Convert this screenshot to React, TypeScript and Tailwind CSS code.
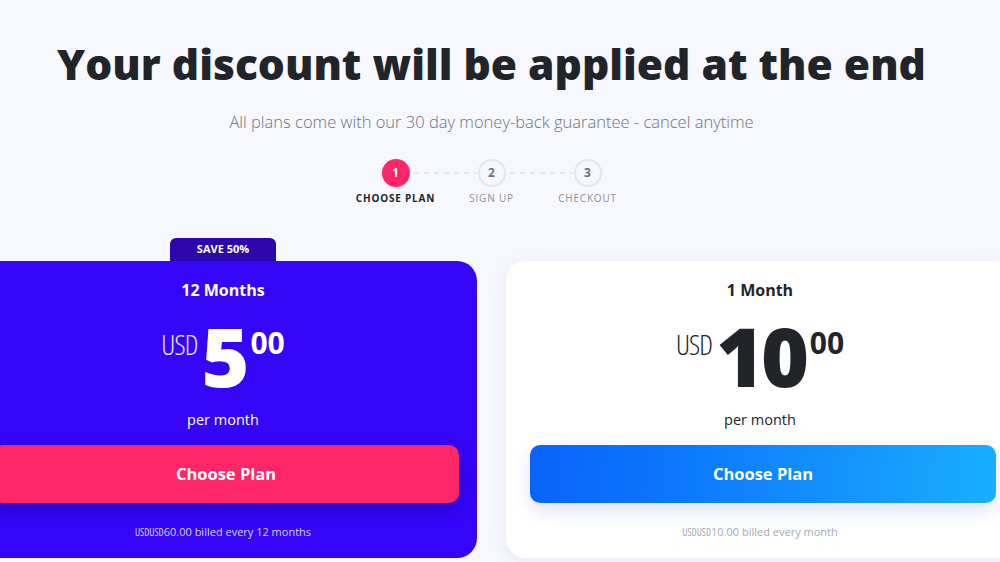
const font = { fontFamily: '"Open Sans", "Noto Sans", sans-serif' };

function Step({ n, label, active }: { n: number; label: string; active?: boolean }) {
  return (
    <div className="flex w-7 flex-col items-center">
      <div
        className={
          active
            ? "flex h-7 w-7 items-center justify-center rounded-full bg-[#ff2667] text-[12px] font-bold text-white"
            : "flex h-7 w-7 items-center justify-center rounded-full border-2 border-[#e4e6ec] bg-[#f7f8fd] text-[12px] font-bold text-[#6c727c]"
        }
      >
        {n}
      </div>
      <div
        className={
          active
            ? "mt-1 whitespace-nowrap text-[10px] leading-[14px] font-bold tracking-[0.08em] text-[#212529]"
            : "mt-1 whitespace-nowrap text-[10px] leading-[14px] tracking-[0.08em] text-[#8a8f98]"
        }
      >
        {label}
      </div>
    </div>
  );
}

function Dashes() {
  return (
    <svg width="68" height="28" className="shrink-0">
      <line x1="4" y1="14" x2="66" y2="14" stroke="#dcdfe6" strokeWidth="1.5" strokeDasharray="5 5" />
    </svg>
  );
}

type Plan = {
  title: string;
  price: string;
  billed: string;
  featured?: boolean;
};

function PlanCard({ plan }: { plan: Plan }) {
  const f = plan.featured;
  return (
    <div
      className={
        f
          ? "relative w-[508px] shrink-0 rounded-[20px] bg-[#3505f8] pt-[18px] pb-[18px] text-white"
          : "relative w-[508px] shrink-0 rounded-[20px] bg-white pt-[18px] pb-[18px] text-[#212529] shadow-[0_4px_18px_rgba(120,130,220,0.12)]"
      }
    >
      {f && (
        <div className="absolute -top-[23px] left-1/2 flex h-[23px] w-[106px] -translate-x-1/2 items-center justify-center rounded-t-[6px] bg-[#2b07ad] text-[11px] font-bold text-white">
          SAVE 50%
        </div>
      )}
      <div className="text-center text-[16px] leading-[22px] font-bold">{plan.title}</div>

      <div className="mt-[13px] flex h-[82px] items-start justify-center">
        <span
          className={
            f
              ? "mt-[16px] mr-[4px] text-[28px] leading-none font-light tracking-[-0.03em] text-white/90"
              : "mt-[16px] mr-[4px] text-[28px] leading-none font-light tracking-[-0.03em] text-[#212529]"
          }
          style={{ fontStretch: "75%" }}
        >
          USD
        </span>
        <span className="text-[82px] leading-none font-extrabold tracking-[-0.04em]">{plan.price}</span>
        <span className="mt-[14px] ml-[4px] text-[30px] leading-none font-bold">00</span>
      </div>

      <div className="mt-[14px] text-center text-[14.5px] leading-[20px]">per month</div>

      <div className="mt-[15px] ml-[24px] mr-[18px]">
        <button
          className={
            f
              ? "flex h-[58px] w-full items-center justify-center rounded-[10px] bg-[#ff2667] text-[16.5px] font-bold text-white shadow-[0_8px_16px_rgba(20,0,120,0.35)]"
              : "flex h-[58px] w-full items-center justify-center rounded-[10px] bg-[linear-gradient(95deg,#0a63fb_0%,#0c72fb_25%,#19aefc_100%)] text-[16.5px] font-bold text-white shadow-[0_8px_18px_rgba(80,110,200,0.18)]"
          }
          style={font}
        >
          Choose Plan
        </button>
      </div>

      <div
        className={
          f
            ? "mt-[21px] text-center text-[11px] leading-[16px] text-[#d9d3ff]"
            : "mt-[21px] text-center text-[11px] leading-[16px] text-[#a3a9b4]"
        }
      >
        <span className="text-[10px]" style={{ fontStretch: "75%" }}>
          USDUSD
        </span>
        {plan.billed}
      </div>
    </div>
  );
}

export default function App() {
  const plans: Plan[] = [
    { title: "12 Months", price: "5", billed: "60.00 billed every 12 months", featured: true },
    { title: "1 Month", price: "10", billed: "10.00 billed every month" },
  ];

  return (
    <div className="min-h-screen w-full overflow-hidden bg-[#f7f8fd]" style={font}>
      <div className="flex w-[983px] flex-col items-center pt-[37px]">
        <h1 className="text-[42.5px] leading-[53px] font-extrabold whitespace-nowrap text-[#212529]">
          Your discount will be applied at the end
        </h1>
        <p className="mt-[20px] text-[16.5px] leading-[24px] font-light text-[#6c727c]">
          All plans come with our 30 day money-back guarantee - cancel anytime
        </p>

        {/* Steps */}
        <div className="mt-[25px] flex items-start">
          <Step n={1} label="CHOOSE PLAN" active />
          <Dashes />
          <Step n={2} label="SIGN UP" />
          <Dashes />
          <Step n={3} label="CHECKOUT" />
        </div>

        {/* Plans */}
        <div className="mt-[56px] flex w-full justify-center gap-[29px]">
          {plans.map((p) => (
            <PlanCard key={p.title} plan={p} />
          ))}
        </div>
      </div>
    </div>
  );
}
